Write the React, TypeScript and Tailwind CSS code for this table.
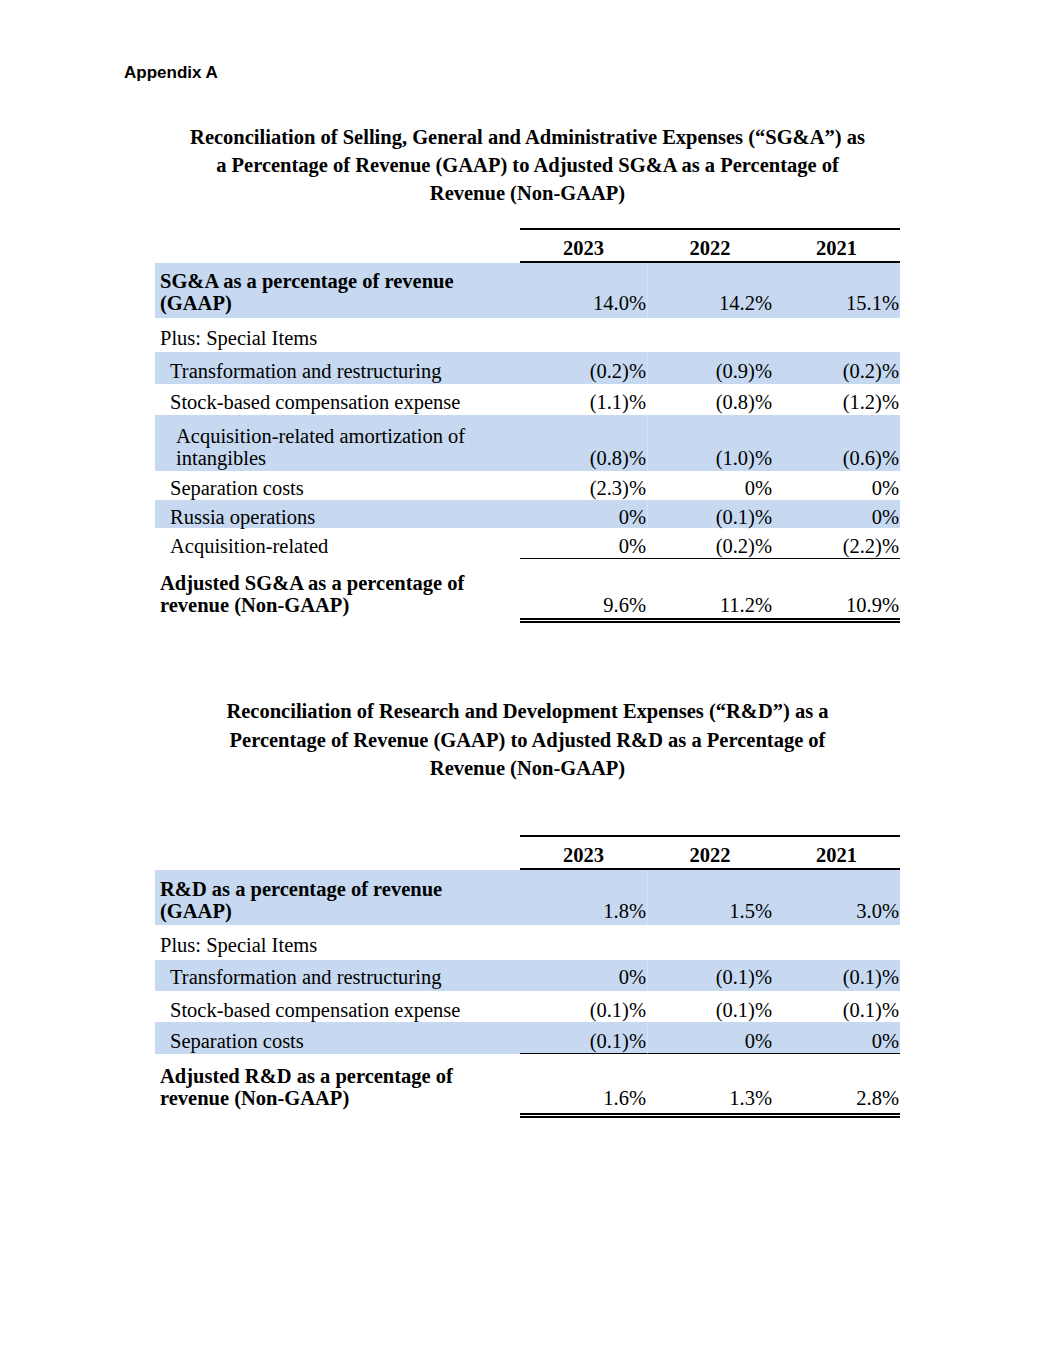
import React from "react";

type Row = {
  label: string[];
  values: string[];
  bold?: boolean;
  header?: boolean;
  blue?: boolean;
  rowCls: string; // height
  padCls: string; // label indent
  pbCls: string; // bottom padding
  borderCls: string; // border classes for value cells
  labelBorderCls: string; // transparent border on label
};

const sgaRows: Row[] = [
  {
    label: [""],
    values: ["2023", "2022", "2021"],
    header: true,
    rowCls: "h-[35px]",
    padCls: "pl-[5px]",
    pbCls: "pb-[2px]",
    borderCls: "border-t-2 border-b-2 border-black",
    labelBorderCls: "border-t-2 border-b-2 border-transparent",
  },
  {
    label: ["SG&A as a percentage of revenue", "(GAAP)"],
    values: ["14.0%", "14.2%", "15.1%"],
    bold: true,
    blue: true,
    rowCls: "h-[55px]",
    padCls: "pl-[5px]",
    pbCls: "pb-[4px]",
    borderCls: "",
    labelBorderCls: "",
  },
  {
    label: ["Plus: Special Items"],
    values: ["", "", ""],
    rowCls: "h-[34px]",
    padCls: "pl-[5px]",
    pbCls: "pb-[3px]",
    borderCls: "",
    labelBorderCls: "",
  },
  {
    label: ["Transformation and restructuring"],
    values: ["(0.2)%", "(0.9)%", "(0.2)%"],
    blue: true,
    rowCls: "h-[32px]",
    padCls: "pl-[15px]",
    pbCls: "pb-[2px]",
    borderCls: "",
    labelBorderCls: "",
  },
  {
    label: ["Stock-based compensation expense"],
    values: ["(1.1)%", "(0.8)%", "(1.2)%"],
    rowCls: "h-[31px]",
    padCls: "pl-[15px]",
    pbCls: "pb-[2px]",
    borderCls: "",
    labelBorderCls: "",
  },
  {
    label: ["Acquisition-related amortization of", "intangibles"],
    values: ["(0.8)%", "(1.0)%", "(0.6)%"],
    blue: true,
    rowCls: "h-[56px]",
    padCls: "pl-[21px]",
    pbCls: "pb-[2px]",
    borderCls: "",
    labelBorderCls: "",
  },
  {
    label: ["Separation costs"],
    values: ["(2.3)%", "0%", "0%"],
    rowCls: "h-[29px]",
    padCls: "pl-[15px]",
    pbCls: "pb-[1px]",
    borderCls: "",
    labelBorderCls: "",
  },
  {
    label: ["Russia operations"],
    values: ["0%", "(0.1)%", "0%"],
    blue: true,
    rowCls: "h-[28px]",
    padCls: "pl-[15px]",
    pbCls: "pb-0",
    borderCls: "",
    labelBorderCls: "",
  },
  {
    label: ["Acquisition-related"],
    values: ["0%", "(0.2)%", "(2.2)%"],
    rowCls: "h-[31px]",
    padCls: "pl-[15px]",
    pbCls: "pb-[1px]",
    borderCls: "border-b border-black",
    labelBorderCls: "border-b border-transparent",
  },
  {
    label: ["Adjusted SG&A as a percentage of", "revenue (Non-GAAP)"],
    values: ["9.6%", "11.2%", "10.9%"],
    bold: true,
    rowCls: "h-[64px]",
    padCls: "pl-[5px]",
    pbCls: "pb-[2px]",
    borderCls: "border-b-[5px] border-double border-black",
    labelBorderCls: "border-b-[5px] border-transparent",
  },
];

const rdRows: Row[] = [
  {
    label: [""],
    values: ["2023", "2022", "2021"],
    header: true,
    rowCls: "h-[35px]",
    padCls: "pl-[5px]",
    pbCls: "pb-[2px]",
    borderCls: "border-t-2 border-b-2 border-black",
    labelBorderCls: "border-t-2 border-b-2 border-transparent",
  },
  {
    label: ["R&D as a percentage of revenue", "(GAAP)"],
    values: ["1.8%", "1.5%", "3.0%"],
    bold: true,
    blue: true,
    rowCls: "h-[55px]",
    padCls: "pl-[5px]",
    pbCls: "pb-[3px]",
    borderCls: "",
    labelBorderCls: "",
  },
  {
    label: ["Plus: Special Items"],
    values: ["", "", ""],
    rowCls: "h-[35px]",
    padCls: "pl-[5px]",
    pbCls: "pb-[4px]",
    borderCls: "",
    labelBorderCls: "",
  },
  {
    label: ["Transformation and restructuring"],
    values: ["0%", "(0.1)%", "(0.1)%"],
    blue: true,
    rowCls: "h-[31px]",
    padCls: "pl-[15px]",
    pbCls: "pb-[3px]",
    borderCls: "",
    labelBorderCls: "",
  },
  {
    label: ["Stock-based compensation expense"],
    values: ["(0.1)%", "(0.1)%", "(0.1)%"],
    rowCls: "h-[31px]",
    padCls: "pl-[15px]",
    pbCls: "pb-[1px]",
    borderCls: "",
    labelBorderCls: "",
  },
  {
    label: ["Separation costs"],
    values: ["(0.1)%", "0%", "0%"],
    blue: true,
    rowCls: "h-[32px]",
    padCls: "pl-[15px]",
    pbCls: "pb-[1px]",
    borderCls: "border-b border-black",
    labelBorderCls: "border-b border-transparent",
  },
  {
    label: ["Adjusted R&D as a percentage of", "revenue (Non-GAAP)"],
    values: ["1.6%", "1.3%", "2.8%"],
    bold: true,
    rowCls: "h-[64px]",
    padCls: "pl-[5px]",
    pbCls: "pb-[4px]",
    borderCls: "border-b-[5px] border-double border-black",
    labelBorderCls: "border-b-[5px] border-transparent",
  },
];

const colW = ["w-[127px]", "w-[126px]", "w-[127px]"];

function Table({ rows }: { rows: Row[] }) {
  return (
    <div className="mx-auto flex w-[745px] flex-col">
      {rows.map((r, i) => (
        <div
          key={i}
          className={`flex ${r.rowCls} ${r.blue ? "bg-[#c6d9f0]" : ""}`}
        >
          <div
            className={`flex w-[365px] flex-col justify-end ${r.padCls} ${r.pbCls} ${r.labelBorderCls} ${
              r.bold ? "font-bold" : ""
            }`}
          >
            {r.label.map((l, j) => (
              <div key={j} className="whitespace-nowrap">
                {l}
              </div>
            ))}
          </div>
          {r.values.map((v, j) => (
            <div
              key={j}
              className={`flex ${colW[j]} items-end ${
                r.header ? "justify-center font-bold" : "justify-end pr-[1px]"
              } ${r.pbCls} ${r.borderCls} ${
                r.blue && j === 1 ? "border-l border-l-[#d3e2f4]" : ""
              }`}
            >
              {v}
            </div>
          ))}
        </div>
      ))}
    </div>
  );
}

export default function App() {
  return (
    <div className="min-h-[1365px] w-[1055px] bg-white text-black">
      <div className="pl-[124px] pt-[63px] font-['Liberation_Sans',Arial,sans-serif] text-[17px] font-bold leading-[20px]">
        Appendix A
      </div>
      <div className="font-['Liberation_Serif','Times_New_Roman',serif] text-[20.5px] leading-[22px]">
        <h1 className="mt-[40px] text-center text-[20.5px] font-bold leading-[28px]">
          Reconciliation of Selling, General and Administrative Expenses (“SG&amp;A”) as
          <br />
          a Percentage of Revenue (GAAP) to Adjusted SG&amp;A as a Percentage of
          <br />
          Revenue (Non-GAAP)
        </h1>
        <div className="mt-[21px]">
          <Table rows={sgaRows} />
        </div>
        <h1 className="mt-[74px] text-center text-[20.5px] font-bold leading-[28.5px]">
          Reconciliation of Research and Development Expenses (“R&amp;D”) as a
          <br />
          Percentage of Revenue (GAAP) to Adjusted R&amp;D as a Percentage of
          <br />
          Revenue (Non-GAAP)
        </h1>
        <div className="mt-[52px]">
          <Table rows={rdRows} />
        </div>
      </div>
    </div>
  );
}
